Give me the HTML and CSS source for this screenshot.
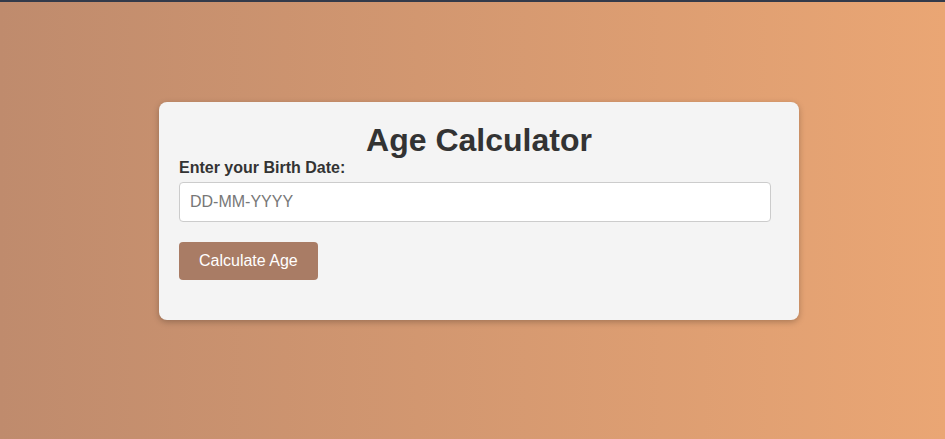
FILE: index.html
```html
<!DOCTYPE html>
<html lang="en">
<head>
<meta charset="utf-8">
<title>Age Calculator</title>
<link rel="stylesheet" href="styles.css">
</head>
<body>
<main class="page">
  <section class="card">
    <h1 class="title">Age Calculator</h1>
    <label class="label" for="dob">Enter your Birth Date:</label>
    <input class="input" id="dob" type="text" placeholder="DD-MM-YYYY">
    <button class="btn" type="button">Calculate Age</button>
    <div class="result"></div>
  </section>
</main>
</body>
</html>
```
FILE: styles.css
```css
html, body {
  margin: 0;
  height: 100%;
}
body {
  font-family: "Liberation Sans", Arial, sans-serif;
  background: linear-gradient(to right, #bf8b6d, #eaa674);
  border-top: 2px solid #333a4a;
  box-sizing: border-box;
}
.page {
  padding: 100px 0 0 159px;
}
.card {
  width: 600px;
  padding: 20px;
  background: #f4f4f4;
  border-radius: 8px;
  box-shadow: 0 2px 6px rgba(0, 0, 0, 0.25);
  display: flex;
  flex-direction: column;
  align-items: flex-start;
}
.title {
  align-self: stretch;
  margin: 0;
  font-size: 32px;
  font-weight: bold;
  text-align: center;
  color: #333;
}
.label {
  font-size: 16px;
  font-weight: bold;
  color: #333;
  margin-bottom: 5px;
}
.input {
  width: 570px;
  padding: 10px;
  font: 16px "Liberation Sans", Arial, sans-serif;
  border: 1px solid #ccc;
  border-radius: 4px;
  background: #fff;
  color: #333;
  outline: none;
  margin: 0;
}
.input::placeholder {
  color: #777;
}
.btn {
  margin-top: 20px;
  padding: 10px 20px;
  font: 16px "Liberation Sans", Arial, sans-serif;
  color: #fff;
  background: #a97c65;
  border: none;
  border-radius: 4px;
}
.result {
  height: 20px;
}
```
